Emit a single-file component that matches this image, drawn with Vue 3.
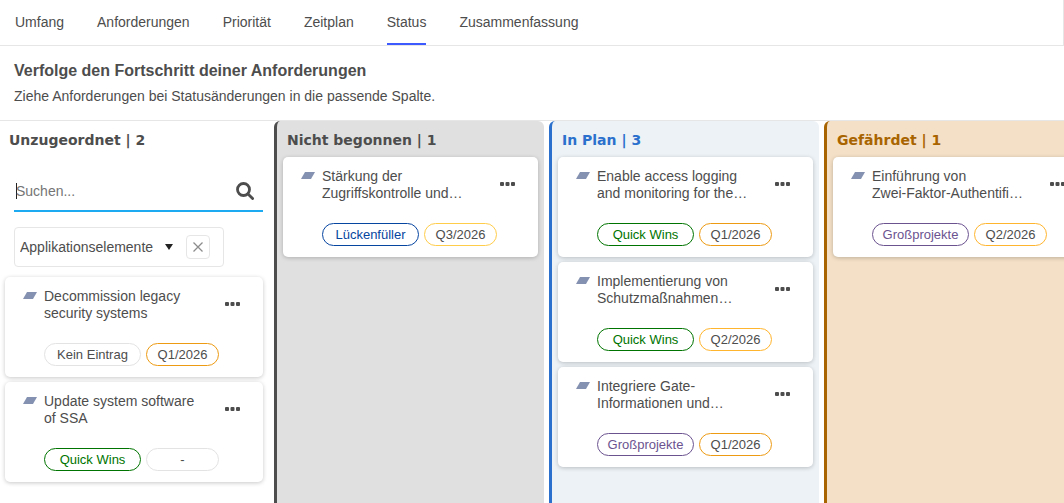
<script setup>
import { ref } from 'vue'

const tabs = ['Umfang', 'Anforderungen', 'Priorität', 'Zeitplan', 'Status', 'Zusammenfassung']
const activeTab = ref('Status')
const search = ref('')

const quick = { text: 'Quick Wins', kind: 'quick' }
const large = { text: 'Großprojekte', kind: 'large' }

const columns = [
  {
    name: 'Unzugeordnet',
    kind: 'unassigned',
    cards: [
      { title: 'Decommission legacy\nsecurity systems', category: { text: 'Kein Eintrag', kind: 'none' }, date: 'Q1/2026', dateKind: 'q1' },
      { title: 'Update system software\nof SSA', category: quick, date: '-', dateKind: 'none' },
    ],
  },
  {
    name: 'Nicht begonnen',
    kind: 'open',
    cards: [
      { title: 'Stärkung der\nZugriffskontrolle und…', category: { text: 'Lückenfüller', kind: 'filler' }, date: 'Q3/2026', dateKind: 'q3' },
    ],
  },
  {
    name: 'In Plan',
    kind: 'plan',
    cards: [
      { title: 'Enable access logging\nand monitoring for the…', category: quick, date: 'Q1/2026', dateKind: 'q1' },
      { title: 'Implementierung von\nSchutzmaßnahmen…', category: quick, date: 'Q2/2026', dateKind: 'q2' },
      { title: 'Integriere Gate-\nInformationen und…', category: large, date: 'Q1/2026', dateKind: 'q1' },
    ],
  },
  {
    name: 'Gefährdet',
    kind: 'risk',
    cards: [
      { title: 'Einführung von\nZwei-Faktor-Authentifi…', category: large, date: 'Q2/2026', dateKind: 'q2' },
    ],
  },
]
</script>

<template>
  <div class="page">
    <nav class="tabs">
      <a
        v-for="tab in tabs"
        :key="tab"
        href="#"
        :class="['tab', { active: tab === activeTab }]"
        @click.prevent="activeTab = tab"
      >{{ tab }}</a>
    </nav>

    <header class="intro">
      <h1>Verfolge den Fortschritt deiner Anforderungen</h1>
      <p>Ziehe Anforderungen bei Statusänderungen in die passende Spalte.</p>
    </header>

    <main class="board">
      <section v-for="column in columns" :key="column.kind" :class="['column', column.kind]">
        <h2>{{ column.name }} | {{ column.cards.length }}</h2>

        <div v-if="column.kind === 'unassigned'" class="tools">
          <div class="search">
            <span class="caret"></span>
            <input v-model="search" type="text" placeholder="Suchen..." aria-label="Suchen" />
            <button type="button" aria-label="Suche starten">
              <svg width="18" height="18" viewBox="0 0 18 18">
                <circle cx="7.5" cy="7.5" r="6" fill="none" stroke="#4d4d4d" stroke-width="2.8" />
                <path d="M12 12l4.600 4.600" stroke="#4d4d4d" stroke-width="2.800" stroke-linecap="round" />
              </svg>
            </button>
          </div>
          <div class="filter">
            <div class="picker">
              <select aria-label="Filter">
                <option>Applikationselemente</option>
              </select>
              <svg width="8" height="6" viewBox="0 0 8 6"><path d="M0 0h8L4 6z" fill="#222" /></svg>
            </div>
            <button type="button" class="clear" aria-label="Filter entfernen">
              <svg width="10" height="10" viewBox="0 0 10 10">
                <path d="M.5.5l9 9M9.500.5l-9 9" stroke="#8c8c8c" stroke-width="1.3" />
              </svg>
            </button>
          </div>
        </div>

        <div class="cards">
          <article v-for="card in column.cards" :key="card.title" class="card">
            <svg class="shape" width="14" height="7" viewBox="0 0 14 7">
              <path d="M4 0h10l-4 7H0z" fill="#8491b1" />
            </svg>
            <h3>{{ card.title }}</h3>
            <button type="button" class="more" aria-label="Mehr">
              <svg width="15" height="4" viewBox="0 0 15 4" fill="#4d4d4d">
                <rect width="4" height="4" rx="1" />
                <rect x="5.500" width="4" height="4" rx="1" />
                <rect x="11" width="4" height="4" rx="1" />
              </svg>
            </button>
            <div class="chips">
              <span :class="['chip', 'category', card.category.kind]">{{ card.category.text }}</span>
              <span :class="['chip', 'date', card.dateKind]">{{ card.date }}</span>
            </div>
          </article>
        </div>
      </section>
    </main>
  </div>
</template>

<style>
body {
  background: #fff;
}
</style>

<style scoped>
* {
  box-sizing: border-box;
}
.page {
  display: flex;
  flex-direction: column;
  min-height: 100vh;
  overflow: hidden;
  color: #4d4d4d;
  font: 14px/17px "Liberation Sans", Arial, sans-serif;
}
h1, h2, h3, p {
  margin: 0;
}
button {
  display: flex;
  align-items: center;
  justify-content: center;
  padding: 0;
  border: 0;
  background: none;
}
input, select {
  border: 0;
  outline: 0;
  background: none;
  color: inherit;
  font: inherit;
}
svg {
  display: block;
}
.tabs {
  display: flex;
  gap: 33px;
  height: 46px;
  padding-left: 15px;
  border-right: 1px solid #e6e6e6;
  border-bottom: 1px solid #e6e6e6;
}
.tab {
  padding-top: 14px;
  border-bottom: 2px solid transparent;
  color: inherit;
  text-decoration: none;
}
.tab.active {
  border-color: #3d5afe;
}
.intro {
  padding: 15px 14px;
  border-bottom: 1px solid #e6e6e6;
}
.intro h1 {
  font-size: 16px;
  line-height: 20px;
}
.intro p {
  margin-top: 7px;
}
.board {
  display: flex;
  flex: 1;
  gap: 5px;
}
.column {
  flex: 0 0 270px;
  padding: 9px 6px 6px;
  border-left: 3px solid;
  border-radius: 6px 6px 0 0;
}
.column h2 {
  padding-left: 4px;
  font: 700 14px/20px "DejaVu Sans", sans-serif;
}
.unassigned {
  flex-basis: 269px;
  padding-left: 5px;
  border-left: 0;
}
.open {
  border-color: #4d4d4d;
  background: #e0e0e0;
}
.plan {
  border-color: #2a70cc;
  background: #ecf2f6;
}
.plan h2 {
  color: #2a70cc;
}
.risk {
  border-color: #a86400;
  background: #f4e0c6;
}
.risk h2 {
  color: #a86400;
}
.tools {
  padding: 22px 0 3px 9px;
}
.search {
  display: flex;
  align-items: center;
  height: 40px;
  padding-right: 9px;
  border-bottom: 2px solid #1eaaf1;
}
.caret {
  width: 1px;
  height: 16px;
  margin: 0 -1px 0 2px;
  background: #222;
}
.search input {
  flex: 1;
  min-width: 0;
  padding: 0;
}
.search input::placeholder {
  color: #757575;
  opacity: 1;
}
.filter {
  display: flex;
  align-items: center;
  gap: 13px;
  width: 210px;
  height: 40px;
  margin-top: 15px;
  padding-left: 5px;
  border: 1px solid #e6e6e6;
  border-radius: 4px;
}
.picker {
  display: grid;
  grid-template-columns: 153px;
  align-items: center;
}
.picker > * {
  grid-area: 1 / 1;
}
.picker svg {
  justify-self: end;
  pointer-events: none;
}
.picker select {
  appearance: none;
  padding: 0 16px 0 0;
}
.clear {
  width: 24px;
  height: 24px;
  border: 1px solid #e6e6e6;
  border-radius: 4px;
}
.cards {
  display: grid;
  gap: 5px;
  margin-top: 7px;
}
.card {
  display: grid;
  grid-template-columns: 21px 1fr 15px;
  align-items: start;
  row-gap: 21px;
  padding: 11px 23px 11px 18px;
  border-radius: 5px;
  background: #fff;
  box-shadow: 0 1px 4px rgba(0, 0, 0, 0.22);
}
.shape {
  margin-top: 4px;
}
.card h3 {
  font-size: 14px;
  font-weight: 400;
  line-height: 17px;
  white-space: pre-line;
}
.more {
  padding-top: 14px;
}
.chips {
  display: flex;
  grid-column: 2 / -1;
  gap: 5px;
}
.chip {
  height: 23px;
  border: 1px solid #e3e3e3;
  border-radius: 12px;
  font-size: 13px;
  line-height: 21px;
  text-align: center;
}
.category {
  width: 97px;
}
.date {
  width: 73px;
}
.quick {
  border-color: #007400;
  color: #007400;
}
.large {
  border-color: #6b5390;
  color: #6b5390;
}
.filler {
  border-color: #0645a0;
  color: #0645a0;
}
.q1 {
  border-color: #ed9b13;
}
.q2 {
  border-color: #ffb52e;
}
.q3 {
  border-color: #ffcd4a;
}
</style>
